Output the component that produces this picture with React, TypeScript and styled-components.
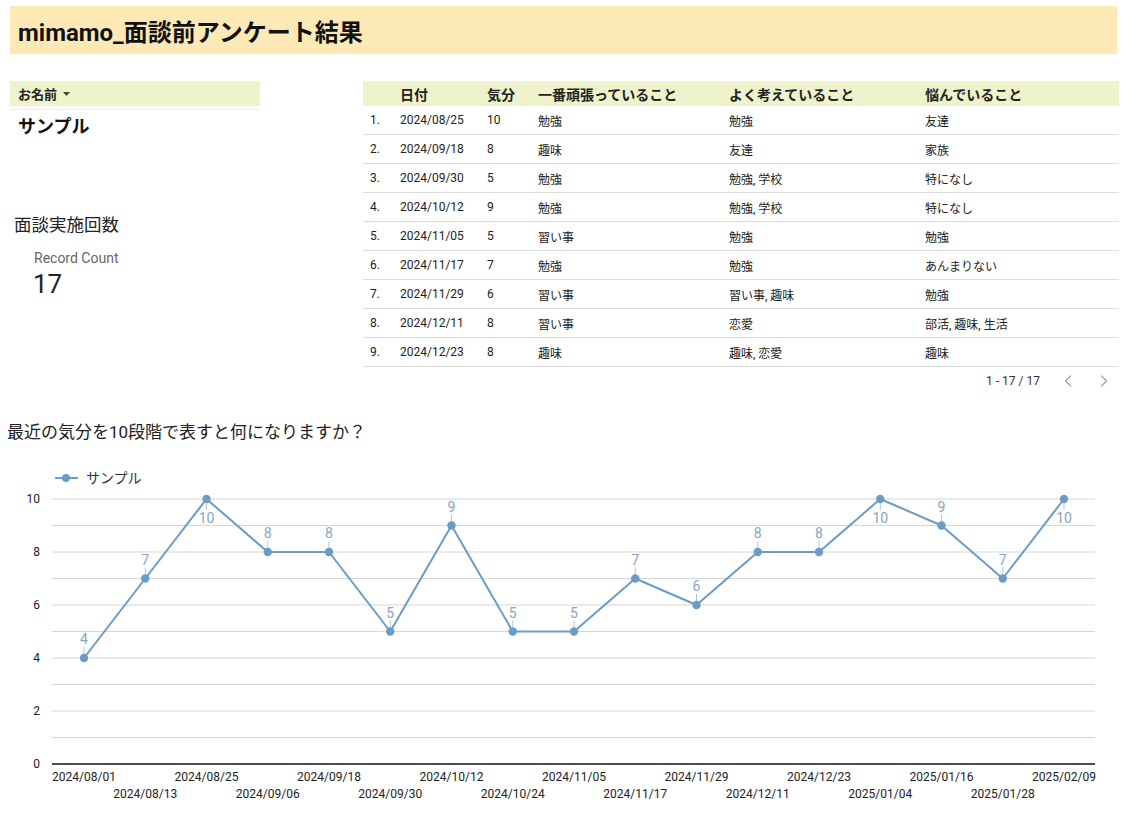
import React from "react";
import styled, { createGlobalStyle } from "styled-components";
import { ChevronLeft, ChevronRight } from "lucide-react";

const Global = createGlobalStyle`
  html, body { margin: 0; padding: 0; background: #fff; }
  body {
    font-family: Roboto, "Noto Sans CJK JP", "Noto Sans", sans-serif;
    color: #222;
  }
`;

const Page = styled.div`
  width: 1126px;
  padding-top: 6px;
`;

const TitleBar = styled.div`
  margin: 0 9px 0 10px;
  height: 48px;
  background: #fce9b6;
  display: flex;
  align-items: center;
  padding-left: 8px;
  font-size: 24px;
  font-weight: 700;
  color: #111;
`;

const TopRow = styled.div`
  display: flex;
  margin-top: 27px;
  padding-left: 10px;
  padding-right: 7px;
`;

const LeftCol = styled.div`
  width: 250px;
  display: flex;
  flex-direction: column;
`;

const FilterHeader = styled.div`
  height: 25px;
  background: #eff3cb;
  display: flex;
  align-items: center;
  gap: 6px;
  padding-left: 8px;
  font-size: 13px;
  font-weight: 700;
  color: #222;
`;

const Divider = styled.div`
  margin-top: 3px;
  height: 1px;
  background: #ececec;
`;

const SelectedName = styled.div`
  margin-top: 6px;
  padding-left: 8px;
  font-size: 18px;
  font-weight: 700;
  line-height: 22px;
  color: #111;
`;

const CountTitle = styled.div`
  margin-top: 75px;
  padding-left: 4px;
  font-size: 17.5px;
  line-height: 24px;
  color: #222;
`;

const CountLabel = styled.div`
  margin-top: 12px;
  padding-left: 24px;
  font-size: 14px;
  line-height: 18px;
  color: #666;
`;

const CountValue = styled.div`
  margin-top: 1px;
  padding-left: 23px;
  font-size: 26px;
  line-height: 32px;
  color: #222;
`;

const TableWrap = styled.div`
  margin-left: auto;
  width: 756px;
  display: flex;
  flex-direction: column;
`;

const cols = "37px 87px 51px 191px 196px 1fr";

const HeaderRow = styled.div`
  display: grid;
  grid-template-columns: ${cols};
  height: 25px;
  align-items: center;
  background: #eff3cb;
  font-size: 14px;
  font-weight: 700;
  color: #222;
`;

const Row = styled.div`
  display: grid;
  grid-template-columns: ${cols};
  height: 28px;
  align-items: center;
  border-bottom: 1px solid #dcdcdc;
  font-size: 12px;
  color: #222;
`;

const IndexCell = styled.div`
  padding-left: 7px;
`;

const Cell = styled.div`
  white-space: nowrap;
`;

const Pager = styled.div`
  height: 28px;
  display: flex;
  align-items: center;
  justify-content: flex-end;
  font-size: 12px;
  color: #333;
  padding-right: 5px;
`;

const PagerText = styled.span`
  margin-right: 2px;
`;

const PagerBtn = styled.span`
  display: inline-flex;
  color: #a0a0a0;
  margin-left: 16px;
`;

const ChartTitle = styled.div`
  margin-top: 25px;
  padding-left: 7px;
  font-size: 17px;
  line-height: 24px;
  color: #222;
`;

const ChartSvg = styled.svg`
  display: block;
  width: 1126px;
  height: 377px;
`;

const rows: string[][] = [
  ["2024/08/25", "10", "勉強", "勉強", "友達"],
  ["2024/09/18", "8", "趣味", "友達", "家族"],
  ["2024/09/30", "5", "勉強", "勉強, 学校", "特になし"],
  ["2024/10/12", "9", "勉強", "勉強, 学校", "特になし"],
  ["2024/11/05", "5", "習い事", "勉強", "勉強"],
  ["2024/11/17", "7", "勉強", "勉強", "あんまりない"],
  ["2024/11/29", "6", "習い事", "習い事, 趣味", "勉強"],
  ["2024/12/11", "8", "習い事", "恋愛", "部活, 趣味, 生活"],
  ["2024/12/23", "8", "趣味", "趣味, 恋愛", "趣味"],
];

const dates = [
  "2024/08/01", "2024/08/13", "2024/08/25", "2024/09/06", "2024/09/18",
  "2024/09/30", "2024/10/12", "2024/10/24", "2024/11/05", "2024/11/17",
  "2024/11/29", "2024/12/11", "2024/12/23", "2025/01/04", "2025/01/16",
  "2025/01/28", "2025/02/09",
];
const values = [4, 7, 10, 8, 8, 5, 9, 5, 5, 7, 6, 8, 8, 10, 9, 7, 10];

const TOP = 444;
const yOf = (v: number) => 764 - 26.5 * v - TOP;
const xOf = (i: number) => 84 + 61.25 * i;
const LINE = "#6b9cc6";
const LABEL = "#86a5c4";

function Chart() {
  const pts = values.map((v, i) => `${xOf(i)},${yOf(v)}`).join(" ");
  return (
    <ChartSvg viewBox="0 0 1126 377">
      <line x1={55} x2={78} y1={478 - TOP} y2={478 - TOP} stroke={LINE} strokeWidth={2} />
      <circle cx={66} cy={478 - TOP} r={4} fill={LINE} />
      <text x={86} y={483 - TOP} fontSize={14} fill="#333">サンプル</text>
      {Array.from({ length: 10 }, (_, k) => k + 1).map((v) => (
        <line key={v} x1={52} x2={1095} y1={yOf(v)} y2={yOf(v)} stroke="#d6d6d6" strokeWidth={1} />
      ))}
      <line x1={52} x2={1095} y1={yOf(0)} y2={yOf(0)} stroke="#111" strokeWidth={1.3} />
      {[0, 2, 4, 6, 8, 10].map((v) => (
        <text key={v} x={40} y={yOf(v) + 4} fontSize={12} fill="#222" textAnchor="end">{v}</text>
      ))}
      {dates.map((d, i) => (
        <text key={d} x={xOf(i)} y={(i % 2 === 0 ? 781 : 798) - TOP} fontSize={12} fill="#222" textAnchor="middle">{d}</text>
      ))}
      <polyline points={pts} fill="none" stroke={LINE} strokeWidth={2} strokeLinejoin="round" />
      {values.map((v, i) => {
        const x = xOf(i);
        const y = yOf(v);
        const below = v === 10;
        return (
          <g key={i}>
            {below ? (
              <line x1={x} x2={x} y1={y + 4} y2={y + 11} stroke="#b3c7dc" strokeWidth={1} />
            ) : (
              <line x1={x} x2={x} y1={y - 4} y2={y - 11} stroke="#b3c7dc" strokeWidth={1} />
            )}
            <circle cx={x} cy={y} r={4.2} fill={LINE} />
            <text x={x} y={below ? y + 24 : y - 14} fontSize={14} fill={LABEL} textAnchor="middle">{v}</text>
          </g>
        );
      })}
    </ChartSvg>
  );
}

export default function App() {
  return (
    <Page>
      <Global />
      <TitleBar>mimamo_面談前アンケート結果</TitleBar>
      <TopRow>
        <LeftCol>
          <FilterHeader>
            お名前
            <svg width="7" height="4" viewBox="0 0 7 4"><path d="M0 0h7L3.5 4z" fill="#444" /></svg>
          </FilterHeader>
          <Divider />
          <SelectedName>サンプル</SelectedName>
          <CountTitle>面談実施回数</CountTitle>
          <CountLabel>Record Count</CountLabel>
          <CountValue>17</CountValue>
        </LeftCol>
        <TableWrap>
          <HeaderRow>
            <div />
            <Cell>日付</Cell>
            <Cell>気分</Cell>
            <Cell>一番頑張っていること</Cell>
            <Cell>よく考えていること</Cell>
            <Cell>悩んでいること</Cell>
          </HeaderRow>
          {rows.map((r, i) => (
            <Row key={i}>
              <IndexCell>{i + 1}.</IndexCell>
              {r.map((c, j) => (
                <Cell key={j}>{c}</Cell>
              ))}
            </Row>
          ))}
          <Pager>
            <PagerText>1 - 17 / 17</PagerText>
            <PagerBtn><ChevronLeft size={20} strokeWidth={1.5} /></PagerBtn>
            <PagerBtn><ChevronRight size={20} strokeWidth={1.5} /></PagerBtn>
          </Pager>
        </TableWrap>
      </TopRow>
      <ChartTitle>最近の気分を10段階で表すと何になりますか？</ChartTitle>
      <Chart />
    </Page>
  );
}
